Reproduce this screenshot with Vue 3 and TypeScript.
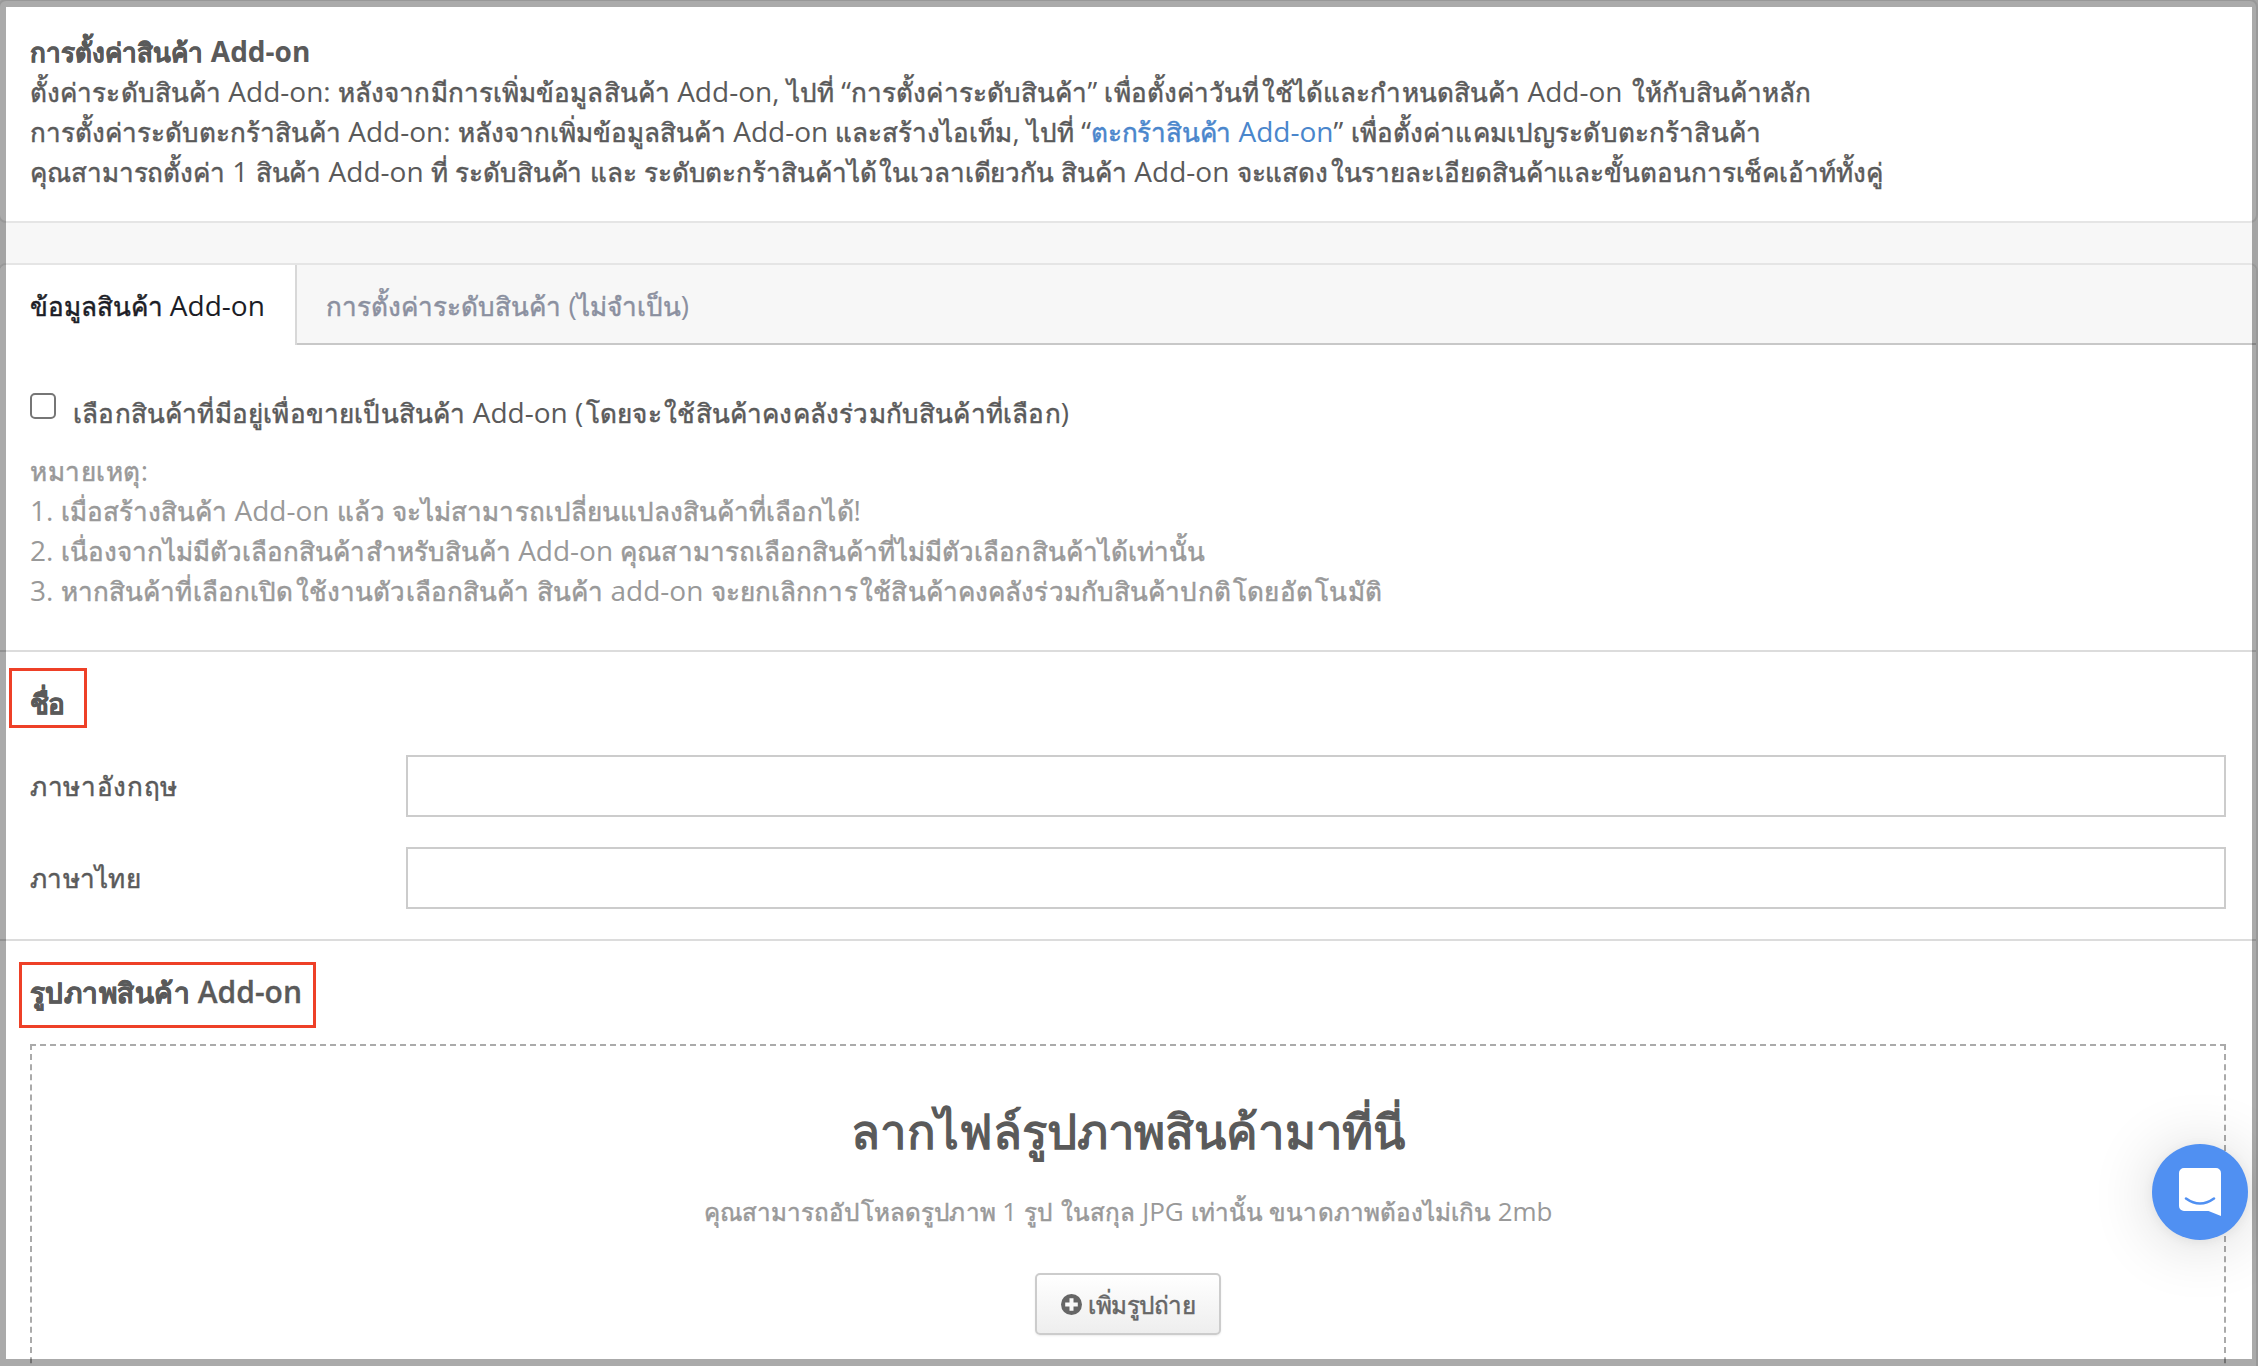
<script setup lang="ts">
import { h, type FunctionalComponent } from 'vue'

// Sets Thai runs slightly smaller than the Latin text around them.
const Th: FunctionalComponent<{ t: string; ls?: number }> = (p) => {
  const parts = p.t.match(/[\u0E00-\u0E7F]+|[^\u0E00-\u0E7F]+/g) ?? []
  return h('span', { class: 'tx', style: { '--ls': `${p.ls ?? 0}px` } },
    parts.map((s) => /[\u0E00-\u0E7F]/.test(s)
      ? h('span', { class: 'th' }, s.split(/(?=[ใโ])/).map((q) => /^[ใโ]/.test(q) ? h('span', { class: 'lead' }, q) : q))
      : s))
}
Th.props = ['t', 'ls']

const notes: [string, number][] = [
  ['หมายเหตุ:', 0.52],
  ['1. เมื่อสร้างสินค้า Add-on แล้ว จะไม่สามารถเปลี่ยนแปลงสินค้าที่เลือกได้!', 0.048],
  ['2. เนื่องจากไม่มีตัวเลือกสินค้าสำหรับสินค้า Add-on คุณสามารถเลือกสินค้าที่ไม่มีตัวเลือกสินค้าได้เท่านั้น', 0.043],
  ['3. หากสินค้าที่เลือกเปิดใช้งานตัวเลือกสินค้า สินค้า add-on จะยกเลิกการใช้สินค้าคงคลังร่วมกับสินค้าปกติโดยอัตโนมัติ', 0.11],
]
</script>

<template>
  <div class="page">
    <section class="panel intro">
      <div class="line bold"><Th t="การตั้งค่าสินค้า Add-on" :ls="0.05" /></div>
      <div class="line"><Th :ls="0.09" t="ตั้งค่าระดับสินค้า Add-on: หลังจากมีการเพิ่มข้อมูลสินค้า Add-on, ไปที่ “การตั้งค่าระดับสินค้า” เพื่อตั้งค่าวันที่ใช้ได้และกำหนดสินค้า Add-on ให้กับสินค้าหลัก" /></div>
      <div class="line"><Th :ls="0" t="การตั้งค่าระดับตะกร้าสินค้า Add-on: หลังจากเพิ่มข้อมูลสินค้า Add-on และสร้างไอเท็ม, ไปที่ “" /><a class="link"><Th :ls="-0.2" t="ตะกร้าสินค้า Add-on" /></a><Th :ls="0.13" t="” เพื่อตั้งค่าแคมเปญระดับตะกร้าสินค้า" /></div>
      <div class="line"><Th :ls="-0.08" t="คุณสามารถตั้งค่า 1 สินค้า Add-on ที่ ระดับสินค้า และ ระดับตะกร้าสินค้าได้ในเวลาเดียวกัน สินค้า Add-on จะแสดงในรายละเอียดสินค้าและขั้นตอนการเช็คเอ้าท์ทั้งคู่" /></div>
    </section>

    <section class="panel main">
      <nav class="tabs">
        <div class="tab active"><Th :ls="-0.06" t="ข้อมูลสินค้า Add-on" /></div>
        <div class="tab"><Th :ls="0.01" t="การตั้งค่าระดับสินค้า (ไม่จำเป็น)" /></div>
      </nav>

      <div class="block pick">
        <label class="check">
          <span class="box"></span>
          <Th :ls="0.18" t="เลือกสินค้าที่มีอยู่เพื่อขายเป็นสินค้า Add-on (โดยจะใช้สินค้าคงคลังร่วมกับสินค้าที่เลือก)" />
        </label>
        <div class="notes">
          <div v-for="n in notes" :key="n[0]" class="line"><Th :t="n[0]" :ls="n[1]" /></div>
        </div>
      </div>

      <div class="block">
        <h2 class="head name"><Th t="ชื่อ" :ls="-0.7" /></h2>
        <div class="field"><span class="flabel"><Th t="ภาษาอังกฤษ" :ls="0.667" /></span><input class="input" type="text" /></div>
        <div class="field"><span class="flabel"><Th t="ภาษาไทย" :ls="0.286" /></span><input class="input" type="text" /></div>
      </div>

      <div class="block last">
        <h2 class="head image"><Th t="รูปภาพสินค้า Add-on" :ls="0.44" /></h2>
        <div class="drop">
          <div class="dtitle"><Th t="ลากไฟล์รูปภาพสินค้ามาที่นี่" :ls="-0.15" /></div>
          <div class="dhint"><Th :ls="0.03" t="คุณสามารถอัปโหลดรูปภาพ 1 รูป ในสกุล JPG เท่านั้น ขนาดภาพต้องไม่เกิน 2mb" /></div>
          <button class="btn" type="button">
            <svg width="21" height="21" viewBox="0 0 21 21"><circle cx="10.5" cy="10.5" r="10.5" fill="#666" /><path d="M10.5 4.2v12.6M4.2 10.5h12.6" stroke="#fafafa" stroke-width="4" /></svg>
            <Th t="เพิ่มรูปถ่าย" :ls="-0.5" />
          </button>
        </div>
      </div>
    </section>

    <div class="frame"></div>
    <div class="chat">
      <svg width="42" height="48" viewBox="0 0 42 48"><path d="M5 0H37a5 5 0 0 1 5 5V48L29.500 43H5a5 5 0 0 1-5-5V5a5 5 0 0 1 5-5z" fill="#fff" /><path d="M7 30.500Q21 40.500 35 30.500" fill="none" stroke="#5090f2" stroke-width="2.600" stroke-linecap="round" /></svg>
    </div>
  </div>
</template>

<style>
body { margin: 0; overflow: hidden; }
.tx { white-space: pre; }
.th { font-size: 0.93em; line-height: 0; letter-spacing: var(--ls); -webkit-text-stroke: 0.5px currentColor; }
.lead { margin-left: 2.5px; }
</style>

<style scoped>
.page { position: relative; width: 2258px; height: 1366px; overflow: hidden; background: #f7f7f7; color: #5a5a5a; font: 28px/40px 'Open Sans', sans-serif; }
.panel { width: 2260px; box-sizing: border-box; margin-left: -2px; border: 2px solid #e5e5e5; border-radius: 8px; background: #fff; overflow: hidden; }
.intro { height: 224px; margin-top: -1px; padding: 30px; }
.main { height: 1200px; margin-top: 40px; }
.line { height: 40px; white-space: nowrap; }
.bold { font-weight: 700; }
.link { color: #4a86cc; }
.tabs { display: flex; height: 80px; background: #f7f7f7; }
.tab { box-sizing: border-box; padding: 20px 29px; color: #8b90a0; border-bottom: 2px solid #c8c8c8; flex: 1; white-space: nowrap; }
.tab.active { flex: none; width: 297px; padding-left: 30px; background: #fff; color: #1c1d26; border-right: 2px solid #d8d8d8; border-bottom: 0; }
.block { box-sizing: border-box; padding: 30px 30px 30px; border-bottom: 2px solid #dcdcdc; }
.pick { height: 307px; padding-top: 47px; }
.check { display: flex; height: 40px; gap: 17px; white-space: nowrap; }
.box { box-sizing: border-box; width: 26px; height: 26px; margin-top: 1px; border: 2px solid #767676; border-radius: 5px; background: #fff; }
.notes { margin-top: 18px; color: #999; }
.head { position: relative; width: max-content; height: 40px; margin: 0 0 33px; font-size: 30px; line-height: 42px; font-weight: 600; -webkit-text-stroke: 0.3px currentColor; }
.head::after { content: ''; position: absolute; box-sizing: border-box; border: 3px solid #ee4027; }
.name::after { left: -21px; top: -14px; width: 78px; height: 60px; }
.image::after { left: -11px; top: -9px; width: 297px; height: 66px; }
.field { display: flex; align-items: center; height: 62px; }
.field + .field { margin-top: 30px; }
.flabel { width: 376px; margin-bottom: 2px; }
.input { flex: 1; height: 62px; box-sizing: border-box; border: 2px solid #ccc; background: #fff; border-radius: 0; padding: 0 12px; font: inherit; }
.block.last { border: 0; }
.drop { box-sizing: border-box; height: 400px; padding-top: 54px; border: 2px dashed #aaa; display: flex; flex-direction: column; align-items: center; }
.dtitle { font-size: 51px; line-height: 58px; height: 60px; font-weight: 500; }
.dtitle :deep(.th) { -webkit-text-stroke-width: 1.3px; }
.dhint { font-size: 26px; margin-top: 31px; color: #999; }
.btn { box-sizing: border-box; display: flex; align-items: center; justify-content: center; gap: 6px; width: 186px; height: 62px; margin-top: 42px; padding: 0; border: 2px solid #ccc; border-radius: 5px; background: linear-gradient(#fff, #eee); box-shadow: 0 1px 2px rgba(0, 0, 0, 0.08); color: #666; font: 26px/38px 'Open Sans', sans-serif; }
.frame { position: absolute; inset: 0; box-sizing: border-box; border-style: solid; border-color: rgba(0, 0, 0, 0.333); border-width: 7px 6px; }
.chat { position: absolute; left: 2152px; top: 1144px; width: 96px; height: 96px; box-sizing: border-box; padding: 24px 27px; border-radius: 50%; background: #5090f2; box-shadow: 0 2px 12px rgba(0, 0, 0, 0.06), 0 4px 64px rgba(0, 0, 0, 0.16); }
.chat svg { display: block; }
</style>
